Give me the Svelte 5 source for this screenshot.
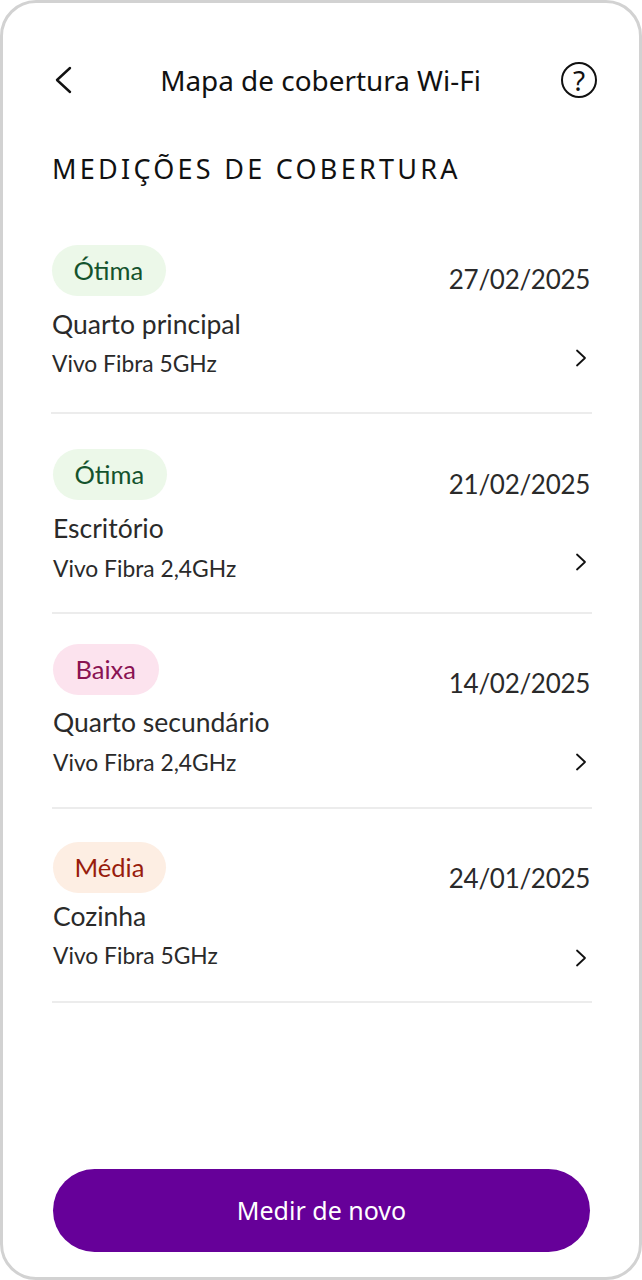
<script>
  const measurements = [
    { level: 'Ótima', tone: 'good', date: '27/02/2025', room: 'Quarto principal', network: 'Vivo Fibra 5GHz' },
    { level: 'Ótima', tone: 'good', date: '21/02/2025', room: 'Escritório', network: 'Vivo Fibra 2,4GHz' },
    { level: 'Baixa', tone: 'low', date: '14/02/2025', room: 'Quarto secundário', network: 'Vivo Fibra 2,4GHz' },
    { level: 'Média', tone: 'mid', date: '24/01/2025', room: 'Cozinha', network: 'Vivo Fibra 5GHz' },
  ];
</script>

<div class="phone">
  <header class="topbar">
    <button class="icon-btn" aria-label="Voltar">
      <svg width="24" height="30" viewBox="0 0 24 30" fill="none" stroke="#111" stroke-width="2.4" stroke-linecap="round" stroke-linejoin="round">
        <path d="M18 3 L5 15 L18 27" />
      </svg>
    </button>
    <h1>Mapa de cobertura Wi-Fi</h1>
    <button class="icon-btn help" aria-label="Ajuda">?</button>
  </header>

  <h2>MEDIÇÕES DE COBERTURA</h2>

  <ul class="list">
    {#each measurements as m}
      <li class="row">
        <div class="top">
          <span class="badge {m.tone}">{m.level}</span>
          <span class="date">{m.date}</span>
        </div>
        <div class="room">{m.room}</div>
        <div class="bottom">
          <span class="network">{m.network}</span>
          <svg class="chevron" width="12" height="18" viewBox="0 0 12 18" fill="none" stroke="#111" stroke-width="1.8" stroke-linecap="round" stroke-linejoin="round">
            <path d="M2 1.5 L10 9 L2 16.5" />
          </svg>
        </div>
      </li>
    {/each}
  </ul>

  <button class="primary">Medir de novo</button>
</div>

<style>
  :global(body) {
    margin: 0;
    background: #fff;
  }

  .phone {
    box-sizing: border-box;
    width: 642px;
    height: 1280px;
    border: 3px solid #d2d2d2;
    border-radius: 36px;
    background: #fff;
    display: flex;
    flex-direction: column;
    padding: 0 49px 25px 49px;
    font-family: "Lato", "Noto Sans", sans-serif;
    color: #2a2a2a;
  }

  .topbar {
    display: flex;
    align-items: center;
    justify-content: space-between;
    height: 40px;
    margin-top: 57px;
  }

  .icon-btn {
    background: none;
    border: none;
    padding: 0;
    display: flex;
  }

  h1 {
    margin: 0 0 0 4px;
    font-family: "Noto Sans", sans-serif;
    font-size: 27.9px;
    font-weight: 400;
    color: #111;
  }

  .help {
    box-sizing: border-box;
    width: 36px;
    height: 36px;
    margin-right: -7px;
    border: 2px solid #111;
    border-radius: 50%;
    align-items: center;
    justify-content: center;
    font-family: "Noto Sans", sans-serif;
    font-size: 28px;
    font-weight: 400;
    color: #111;
  }

  h2 {
    margin: 51px 0 0;
    font-family: "Noto Sans", sans-serif;
    font-size: 27px;
    line-height: 36px;
    font-weight: 400;
    letter-spacing: 3.26px;
    color: #111;
    white-space: nowrap;
  }

  .list {
    list-style: none;
    margin: 0;
    padding: 0;
    margin-right: -2px;
  }

  .row {
    border-bottom: 2px solid #ececec;
    margin-top: 33px;
    padding-bottom: 29px;
  }

  .row:nth-child(1) {
    margin-top: 58px;
    margin-left: -1px;
    padding-bottom: 32px;
  }

  .row:nth-child(2) {
    margin-top: 35px;
    padding-bottom: 28px;
  }

  .row:nth-child(3) {
    margin-top: 30px;
  }

  .top {
    display: flex;
    align-items: flex-start;
    justify-content: space-between;
    height: 51px;
  }

  .badge {
    height: 51px;
    line-height: 51px;
    padding: 0 21.5px;
    border-radius: 26px;
    font-size: 25.5px;
    margin-left: 1px;
  }

  .good {
    background: #ecf8e9;
    color: #14532d;
    padding: 0 23px 0 21.5px;
  }

  .low {
    background: #fce3ee;
    color: #8a1353;
    padding: 0 23.5px 0 22.5px;
  }

  .mid {
    background: #fdeee3;
    color: #981c0c;
  }

  .date {
    margin-top: 16px;
    margin-right: 2px;
    font-size: 26px;
    line-height: 36px;
    letter-spacing: -0.3px;
  }

  .row:nth-child(2) .date {
    margin-top: 17px;
  }

  .row:nth-child(3) .date {
    margin-top: 21px;
  }

  .row:nth-child(4) .date {
    margin-top: 18px;
  }

  .room {
    margin-top: 12px;
    font-size: 26.5px;
    line-height: 32px;
    padding-left: 1px;
  }

  .row:nth-child(3) .room {
    margin-top: 11px;
  }

  .row:nth-child(4) .room {
    margin-top: 7px;
  }

  .bottom {
    display: flex;
    align-items: center;
    justify-content: space-between;
    margin-top: 8px;
    padding-left: 1px;
    padding-right: 5px;
    height: 32px;
  }

  .network {
    font-size: 22.8px;
  }

  .row:nth-child(1) .network,
  .row:nth-child(4) .network {
    margin-bottom: 2px;
  }

  .row:nth-child(-n + 2) .chevron {
    margin-bottom: 12px;
  }

  .row:nth-child(4) .chevron {
    margin-top: 4px;
  }

  .primary {
    margin-top: auto;
    margin-left: 1px;
    height: 83px;
    width: 537px;
    padding: 0 0 2px;
    border: none;
    border-radius: 42px;
    background: #660099;
    color: #fff;
    font-family: "Noto Sans", sans-serif;
    font-size: 25px;
  }
</style>
